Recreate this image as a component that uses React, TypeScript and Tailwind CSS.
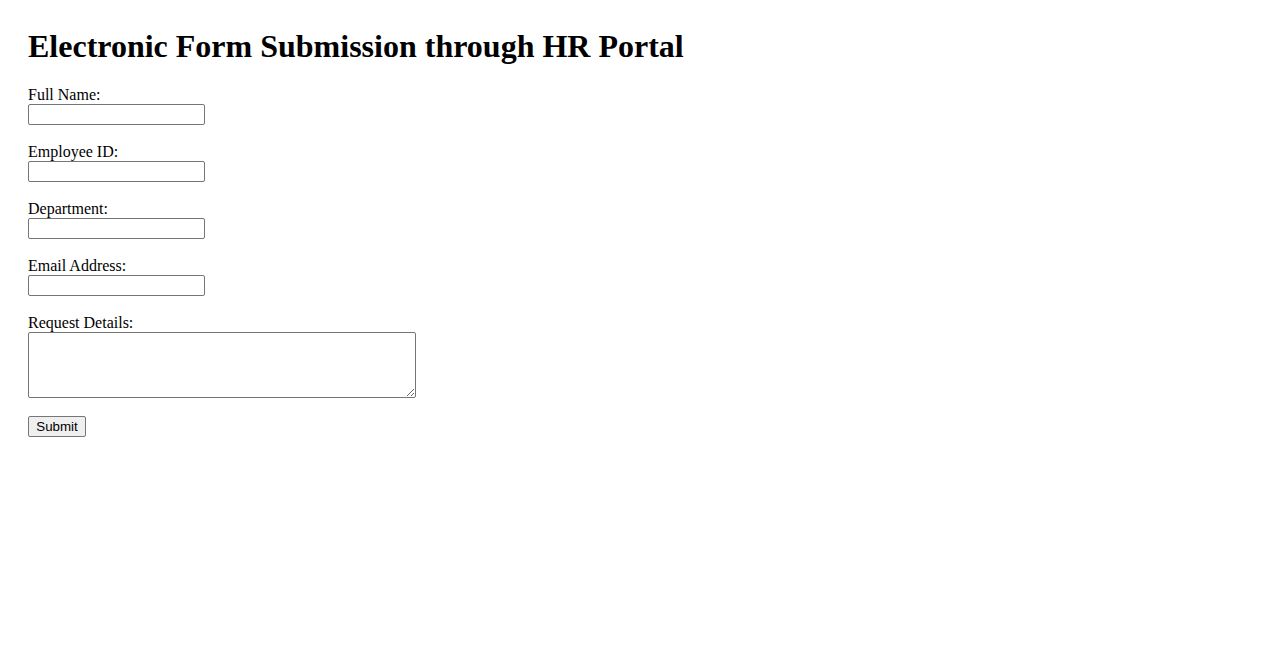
import React from 'react';

const fields = ['Full Name:', 'Employee ID:', 'Department:', 'Email Address:'];

export default function App() {
  return (
    <div className="min-h-screen bg-white px-[28px] pt-[28px] text-black font-['Liberation_Serif',serif]">
      <h1 className="text-[32px] font-bold leading-[37px] mb-[21px]">
        Electronic Form Submission through HR Portal
      </h1>
      <form onSubmit={(e) => e.preventDefault()}>
        {fields.map((label) => (
          <div key={label} className="mb-[18px]">
            <label className="block text-[16px] leading-[18px]">{label}</label>
            <input
              type="text"
              className="block h-[21px] w-[177px] rounded-[2px] border border-[#767676] bg-white px-[2px] text-[13px] font-['Liberation_Sans',sans-serif]"
            />
          </div>
        ))}
        <div className="mb-[18px]">
          <label className="block text-[16px] leading-[18px]">Request Details:</label>
          <textarea className="block h-[66px] w-[388px] rounded-[2px] border border-[#767676] bg-white px-[2px] text-[13px] font-['Liberation_Mono',monospace]" />
        </div>
        <button
          type="submit"
          className="block h-[21px] w-[58px] rounded-[2px] border border-[#767676] bg-[#efefef] text-[13.33px] leading-[19px] font-['Liberation_Sans',sans-serif]"
        >
          Submit
        </button>
      </form>
    </div>
  );
}
